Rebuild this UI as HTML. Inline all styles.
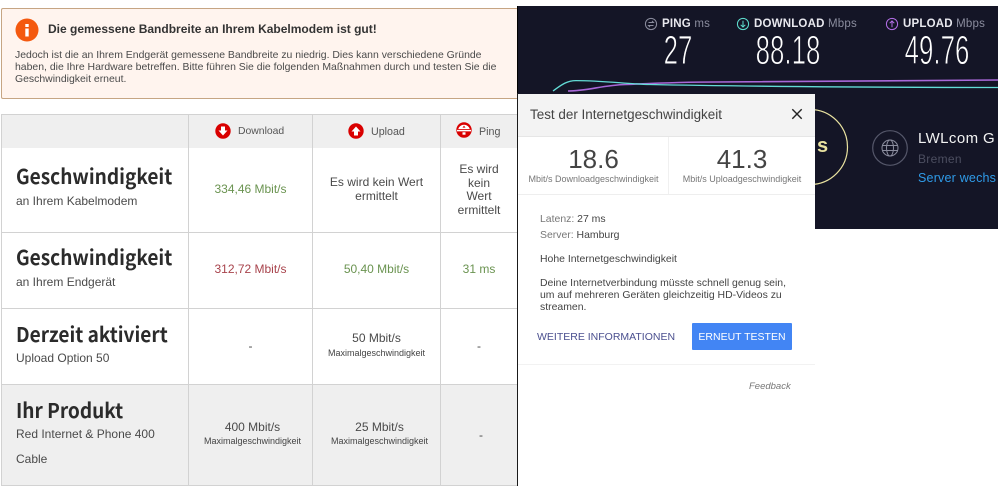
<!DOCTYPE html>
<html lang="de"><head><meta charset="utf-8"><title>Speedtest</title>
<style>
html,body{margin:0;padding:0;background:#fff}
#p{position:relative;width:998px;height:486px;overflow:hidden;background:#fff;font-family:"Liberation Sans",sans-serif;color:#4a4a4a}
#p div,#p svg{position:absolute}
.t{white-space:nowrap;line-height:1}
.c{text-align:center;white-space:nowrap}
.h{font-family:"Noto Sans CJK SC","Liberation Sans",sans-serif;font-weight:700;font-size:20.5px;color:#2b2b2b;left:16px;white-space:nowrap;line-height:1;transform:scaleX(.93);transform-origin:0 0}
.s{font-size:12px;color:#4a4a4a;left:16px;white-space:nowrap;line-height:1}
.v{font-size:12px;line-height:13.5px}
.m{font-size:9px;color:#444;line-height:1}
.n{color:#fff;font-size:41px;line-height:1;transform:scaleX(.63);-webkit-text-stroke:.9px #141526;white-space:nowrap;text-align:center}
.l{font-size:11.5px;font-weight:700;color:#e8e8ee;white-space:nowrap;line-height:1;letter-spacing:.2px}
.l span{font-weight:400;color:#8b8d9e}
</style></head><body><div id="p">

<!-- notice -->
<div style="left:1px;top:8px;width:516px;height:89px;background:#fff4ee;border:1px solid #c6a583;border-right:0;border-radius:2px"></div>
<svg style="left:15px;top:18px" width="24" height="24" viewBox="0 0 24 24"><circle cx="12" cy="12" r="11.5" fill="#f4590f"/><rect x="10.3" y="6" width="3.4" height="3" fill="#fff"/><rect x="10.3" y="10.5" width="3.4" height="8" fill="#fff"/></svg>
<div class="t" style="left:48px;top:23px;font-size:12px;font-weight:700;color:#333">Die gemessene Bandbreite an Ihrem Kabelmodem ist gut!</div>
<div class="t" style="left:15px;top:50px;font-size:10.45px;line-height:12px;color:#4a4a4a">Jedoch ist die an Ihrem Endgerät gemessene Bandbreite zu niedrig. Dies kann verschiedene Gründe<br>haben, die Ihre Hardware betreffen. Bitte führen Sie die folgenden Maßnahmen durch und testen Sie die<br>Geschwindigkeit erneut.</div>

<!-- table backgrounds -->
<div style="left:1px;top:114px;width:516px;height:34px;background:#efefef"></div>
<div style="left:1px;top:385px;width:516px;height:100px;background:#efefef"></div>
<!-- table lines -->
<div style="left:1px;top:114px;width:516px;height:1px;background:#d2d2d2"></div>
<div style="left:1px;top:232px;width:516px;height:1px;background:#d2d2d2"></div>
<div style="left:1px;top:308px;width:516px;height:1px;background:#d2d2d2"></div>
<div style="left:1px;top:384px;width:516px;height:1px;background:#d2d2d2"></div>
<div style="left:1px;top:485px;width:516px;height:1px;background:#d2d2d2"></div>
<div style="left:1px;top:114px;width:1px;height:372px;background:#d2d2d2"></div>
<div style="left:188px;top:114px;width:1px;height:372px;background:#d2d2d2"></div>
<div style="left:312px;top:114px;width:1px;height:372px;background:#d2d2d2"></div>
<div style="left:440px;top:114px;width:1px;height:372px;background:#d2d2d2"></div>

<!-- header -->
<svg style="left:215px;top:123px" width="16" height="16" viewBox="0 0 16 16"><circle cx="8" cy="8" r="7.7" fill="#d90000"/><path d="M6 3.5h4v4h2.5L8 12.5 3.500 7.500H6z" fill="#fff"/></svg>
<div class="t" style="left:238px;top:127px;font-size:10.4px;color:#555">Download</div>
<svg style="left:348px;top:123px" width="16" height="16" viewBox="0 0 16 16"><circle cx="8" cy="8" r="7.700" fill="#d90000"/><path d="M6 12.500h4v-4h2.500L8 3.500 3.500 8.500H6z" fill="#fff"/></svg>
<div class="t" style="left:371px;top:127px;font-size:10.7px;color:#555">Upload</div>
<svg style="left:456px;top:122px" width="16" height="16" viewBox="0 0 16 16"><circle cx="8" cy="8" r="7.700" fill="#d90000"/><path d="M2.300 7a5.800 5.200 0 0 1 11.400 0z" fill="#fff"/><path d="M1 8.600h14" stroke="#fff" stroke-width="1.500"/><path d="M6.500 5.600L8 3.600l1.500 2z" fill="#d90000"/><rect x="6.500" y="10.300" width="3" height="2.400" fill="#fff"/></svg>
<div class="t" style="left:479px;top:127px;font-size:10.7px;color:#555">Ping</div>

<!-- row labels -->
<div class="h" style="top:165px">Geschwindigkeit</div>
<div class="s" style="top:195px">an Ihrem Kabelmodem</div>
<div class="h" style="top:246px">Geschwindigkeit</div>
<div class="s" style="top:276px">an Ihrem Endgerät</div>
<div class="h" style="top:323px">Derzeit aktiviert</div>
<div class="s" style="top:352px">Upload Option 50</div>
<div class="h" style="top:399px">Ihr Produkt</div>
<div class="s" style="top:428px">Red Internet &amp; Phone 400</div>
<div class="s" style="top:453px">Cable</div>

<!-- row 1 -->
<div class="c v" style="left:189px;width:123px;top:183px;color:#6a9350">334,46 Mbit/s</div>
<div class="c v" style="left:313px;width:127px;top:176px">Es wird kein Wert<br>ermittelt</div>
<div class="c v" style="left:441px;width:76px;top:163px">Es wird<br>kein<br>Wert<br>ermittelt</div>
<!-- row 2 -->
<div class="c v" style="left:189px;width:123px;top:263px;color:#a8434c">312,72 Mbit/s</div>
<div class="c v" style="left:313px;width:127px;top:263px;color:#6a9350">50,40 Mbit/s</div>
<div class="c v" style="left:441px;width:76px;top:263px;color:#6a9350">31 ms</div>
<!-- row 3 -->
<div class="c v" style="left:189px;width:123px;top:340px">-</div>
<div class="c v" style="left:313px;width:127px;top:332px">50 Mbit/s</div>
<div class="c m" style="left:313px;width:127px;top:349px">Maximalgeschwindigkeit</div>
<div class="c v" style="left:441px;width:76px;top:340px">-</div>
<!-- row 4 -->
<div class="c v" style="left:191px;width:123px;top:421px">400 Mbit/s</div>
<div class="c m" style="left:191px;width:123px;top:437px">Maximalgeschwindigkeit</div>
<div class="c v" style="left:316px;width:127px;top:421px">25 Mbit/s</div>
<div class="c m" style="left:316px;width:127px;top:437px">Maximalgeschwindigkeit</div>
<div class="c v" style="left:443px;width:76px;top:429px">-</div>

<!-- dark speedtest panel -->
<div style="left:518px;top:6px;width:480px;height:223px;background:#141526"></div>
<div style="left:517px;top:6px;width:1px;height:88px;background:#000"></div>

<svg style="left:644px;top:17px" width="14" height="14" viewBox="0 0 14 14" fill="none" stroke="#8b8d9e" stroke-width="1"><circle cx="7" cy="7" r="5.600"/><path d="M4.500 5.500h5L8 4M9.500 8.500h-5L6 10"/></svg>
<div class="l" style="left:662px;top:19px">PING <span>ms</span></div>
<div class="n" style="left:638px;width:80px;top:30px">27</div>

<svg style="left:736px;top:17px" width="14" height="14" viewBox="0 0 14 14" fill="none" stroke="#5fe0d0" stroke-width="1"><circle cx="7" cy="7" r="5.600"/><path d="M7 3.800v6.200M4.700 7.800L7 10l2.300-2.200"/></svg>
<div class="l" style="left:754px;top:19px">DOWNLOAD <span>Mbps</span></div>
<div class="n" style="left:728px;width:120px;top:30px">88.18</div>

<svg style="left:885px;top:17px" width="14" height="14" viewBox="0 0 14 14" fill="none" stroke="#b56fe8" stroke-width="1"><circle cx="7" cy="7" r="5.600"/><path d="M7 10.200V4M4.700 6.200L7 4l2.300 2.200"/></svg>
<div class="l" style="left:903px;top:19px">UPLOAD <span>Mbps</span></div>
<div class="n" style="left:877px;width:120px;top:30px">49.76</div>

<svg style="left:518px;top:70px" width="480" height="26" viewBox="0 0 480 26" fill="none">
<path d="M50 21C70 21 85 15 108 14.500C140 13 170 12 198 12C300 11 400 10.500 480 10" stroke="#a868d8" stroke-width="1.600"/>
<path d="M35 21C42 16 48 10.600 58 10.600C85 10.600 110 14 132 14.500C200 16 350 17.500 480 17.500" stroke="#63dcd6" stroke-width="1.300"/>
</svg>

<!-- gauge ring + right side -->
<svg style="left:780px;top:100px" width="80" height="100" viewBox="0 0 80 100" fill="none"><circle cx="30" cy="47" r="37.500" stroke="#e9e2a0" stroke-width="1.200"/></svg>
<div class="t" style="left:817px;top:136px;font-size:20px;font-weight:700;color:#e9e2a0">s</div>
<svg style="left:872px;top:130px" width="36" height="36" viewBox="0 0 36 36" fill="none" stroke="#8b8d9e"><circle cx="18" cy="18" r="17.300" stroke="#55576a" stroke-width="1.200"/><circle cx="18" cy="18" r="8"/><ellipse cx="18" cy="18" rx="3.500" ry="8"/><path d="M10 15.500h16M10 20.500h16"/></svg>
<div class="t" style="left:918px;top:131px;font-size:15px;color:#f2f2f2;letter-spacing:.4px">LWLcom G</div>
<div class="t" style="left:918px;top:153px;font-size:12px;color:#4c4e60;letter-spacing:.3px">Bremen</div>
<div class="t" style="left:918px;top:172px;font-size:12.500px;color:#2f9be8;letter-spacing:.2px">Server wechs</div>

<!-- modal -->
<div style="left:517px;top:93px;width:1px;height:393px;background:#1a1a1a"></div>
<div style="left:518px;top:94px;width:297px;height:392px;background:#fff"></div>
<div style="left:518px;top:94px;width:297px;height:42px;background:#f3f3f3;border-bottom:1px solid #e6e6e6"></div>
<div class="t" style="left:530px;top:108px;font-size:13.450px;color:#444">Test der Internetgeschwindigkeit</div>
<svg style="left:791px;top:108px" width="12" height="12" viewBox="0 0 12 12"><path d="M1.300 1.300l9.400 9.400M10.700 1.300l-9.400 9.400" stroke="#222" stroke-width="1.400"/></svg>
<div style="left:668px;top:137px;width:1px;height:58px;background:#f0f0f0"></div>
<div style="left:518px;top:194px;width:297px;height:1px;background:#eeeeee"></div>
<div class="c" style="left:519px;width:149px;top:144px;font-size:26px;line-height:30px;color:#444">18.6</div>
<div class="c" style="left:669px;width:146px;top:144px;font-size:26px;line-height:30px;color:#444">41.3</div>
<div class="c" style="left:519px;width:149px;top:174px;font-size:9px;line-height:11px;color:#777">Mbit/s Downloadgeschwindigkeit</div>
<div class="c" style="left:669px;width:146px;top:174px;font-size:9px;line-height:11px;color:#777">Mbit/s Uploadgeschwindigkeit</div>
<div class="t" style="left:540px;top:215px;font-size:10.450px;color:#777">Latenz: <span style="color:#444">27 ms</span></div>
<div class="t" style="left:540px;top:231px;font-size:10.450px;color:#777">Server: <span style="color:#444">Hamburg</span></div>
<div class="t" style="left:540px;top:255px;font-size:10.450px;color:#444">Hohe Internetgeschwindigkeit</div>
<div class="t" style="left:540px;top:278px;font-size:10.450px;line-height:12px;color:#444">Deine Internetverbindung müsste schnell genug sein,<br>um auf mehreren Geräten gleichzeitig HD-Videos zu<br>streamen.</div>
<div class="t" style="left:537px;top:332px;font-size:10.500px;color:#4a4f8f">WEITERE INFORMATIONEN</div>
<div class="c" style="left:692px;top:323px;width:100px;height:27px;line-height:28px;background:#4285f4;color:#fff;font-size:10.500px;border-radius:1px">ERNEUT TESTEN</div>
<div style="left:518px;top:364px;width:297px;height:1px;background:#f2f2f2"></div>
<div class="t" style="left:749px;top:382px;font-size:9.500px;font-style:italic;color:#777">Feedback</div>

</div></body></html>
